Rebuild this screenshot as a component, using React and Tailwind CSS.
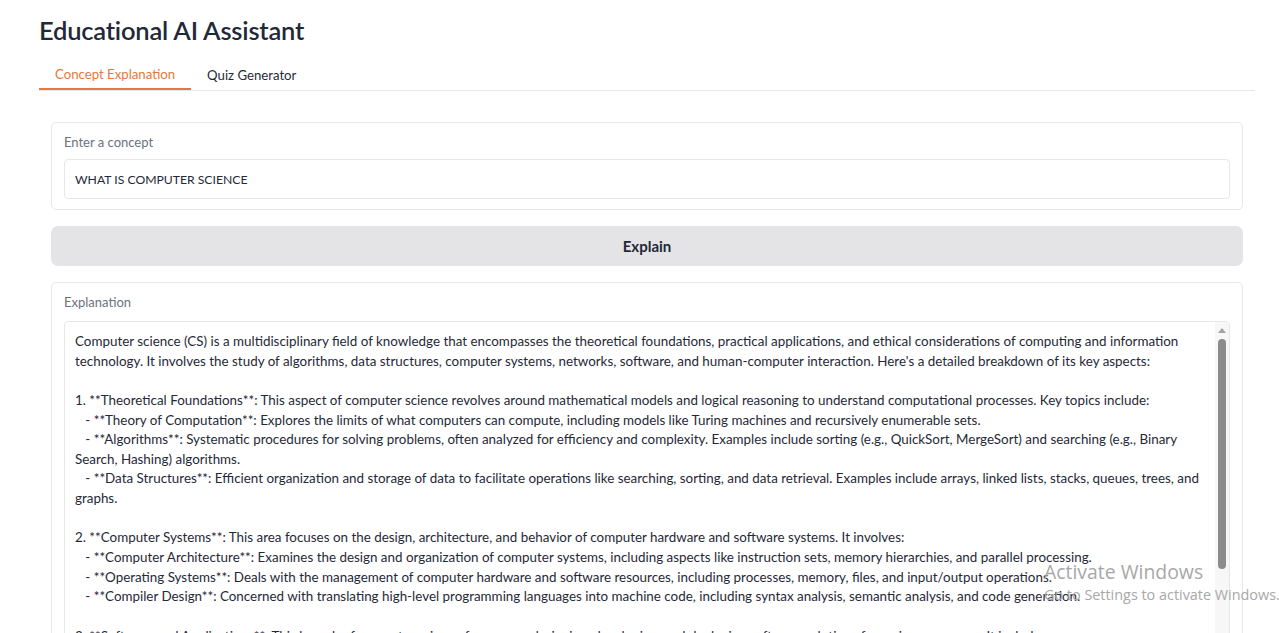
import React from "react";

const lines = [
  "Computer science (CS) is a multidisciplinary field of knowledge that encompasses the theoretical foundations, practical applications, and ethical considerations of computing and information",
  "technology. It involves the study of algorithms, data structures, computer systems, networks, software, and human-computer interaction. Here's a detailed breakdown of its key aspects:",
  "",
  "1. **Theoretical Foundations**: This aspect of computer science revolves around mathematical models and logical reasoning to understand computational processes. Key topics include:",
  "   - **Theory of Computation**: Explores the limits of what computers can compute, including models like Turing machines and recursively enumerable sets.",
  "   - **Algorithms**: Systematic procedures for solving problems, often analyzed for efficiency and complexity. Examples include sorting (e.g., QuickSort, MergeSort) and searching (e.g., Binary",
  "Search, Hashing) algorithms.",
  "   - **Data Structures**: Efficient organization and storage of data to facilitate operations like searching, sorting, and data retrieval. Examples include arrays, linked lists, stacks, queues, trees, and",
  "graphs.",
  "",
  "2. **Computer Systems**: This area focuses on the design, architecture, and behavior of computer hardware and software systems. It involves:",
  "   - **Computer Architecture**: Examines the design and organization of computer systems, including aspects like instruction sets, memory hierarchies, and parallel processing.",
  "   - **Operating Systems**: Deals with the management of computer hardware and software resources, including processes, memory, files, and input/output operations.",
  "   - **Compiler Design**: Concerned with translating high-level programming languages into machine code, including syntax analysis, semantic analysis, and code generation.",
  "",
  "3. **Software and Applications**: This branch of computer science focuses on designing, developing, and deploying software solutions for various purposes. It includes:",
];

export default function App() {
  return (
    <div
      className="relative w-[1279px] h-[633px] overflow-hidden bg-white text-[#1f2937]"
      style={{ fontFamily: "Lato, 'Noto Sans', sans-serif" }}
    >
      <div className="pl-[39px] pr-[24px] pt-[14px]">
        <h1 className="text-[25.5px] leading-[32px] font-semibold text-[#1f2937] tracking-[-0.2px]">
          Educational AI Assistant
        </h1>
        <div className="mt-[12px] flex border-b border-[#e5e7eb]">
          <div className="h-[32px] px-4 pt-[3px] flex items-center text-[13.2px] text-[#e8773a] border-b-2 border-[#e8773a] -mb-px">
            Concept Explanation
          </div>
          <div className="h-[32px] px-4 pt-[3px] flex items-center text-[13.2px] text-[#1f2937]">
            Quiz Generator
          </div>
        </div>

        <div className="px-[12px] pt-[31px]">
          <div className="border border-[#e5e7eb] rounded-[5px] px-[12px] pt-[10px] pb-[10px]">
            <div className="text-[13px] leading-[18px] text-[#6b7280]">Enter a concept</div>
            <div className="mt-[8px] h-[40px] border border-[#e5e7eb] rounded-[4px] flex items-center px-[10px] pt-[2px] text-[12.2px] text-[#1f2937]">
              WHAT IS COMPUTER SCIENCE
            </div>
          </div>

          <button className="mt-[16px] w-full h-[40px] bg-[#e4e4e7] rounded-[7px] text-[15px] font-bold text-[#1f2937]">
            Explain
          </button>

          <div className="mt-[16px] border border-[#e5e7eb] rounded-[5px] px-[12px] pt-[10px] h-[400px]">
            <div className="text-[13px] leading-[18px] text-[#6b7280]">Explanation</div>
            <div className="mt-[10px] relative border border-[#e5e7eb] rounded-[4px] h-[360px] overflow-hidden">
              <div className="pl-[10px] pt-[10px] pr-[20px] text-[13.4px] leading-[19.65px] text-[#1f2937]">
                {lines.map((l, i) => (
                  <div key={i} className="whitespace-pre h-[19.65px]">
                    {l}
                  </div>
                ))}
              </div>
              <div className="absolute right-0 top-0 bottom-0 w-[14px] bg-[#f7f7f7] flex flex-col items-center">
                <div className="mt-[6px] w-0 h-0 border-l-[4px] border-r-[4px] border-b-[5px] border-l-transparent border-r-transparent border-b-[#a3a3a3]" />
                <div className="mt-[6px] w-[8px] h-[230px] rounded-full bg-[#8c8c8c]" />
              </div>
            </div>
          </div>
        </div>
      </div>

      <div
        className="absolute left-[1044px] top-[559px] text-[#a8a8a8] pointer-events-none"
        style={{ fontFamily: "'Open Sans', 'Noto Sans', sans-serif" }}
      >
        <div className="text-[19.4px] leading-[26px]">Activate Windows</div>
        <div className="text-[14.4px] leading-[20px] whitespace-nowrap">Go to Settings to activate Windows.</div>
      </div>
    </div>
  );
}
